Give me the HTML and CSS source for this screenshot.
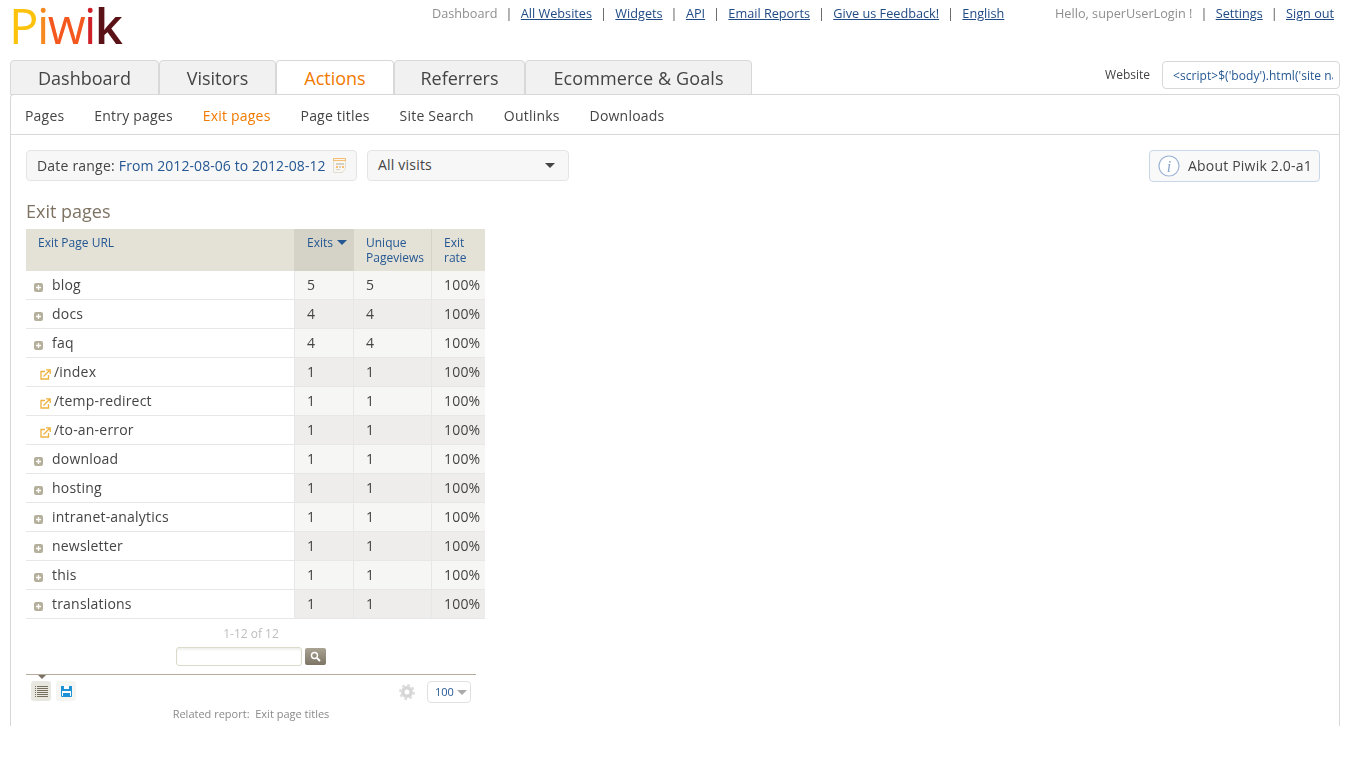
FILE: index.html
```html
<!DOCTYPE html>
<html lang="en">

<head>
    <meta charset="UTF-8">
    <meta name="viewport" content="width=device-width, initial-scale=1.0">
    <title>Piwik - Exit pages</title>
    <link rel="stylesheet" href="styles.css">
</head>

<body>
    <div class="topBar">
        <div class="logo"><span class="l1">P</span><span class="l2">i</span><span class="l3">w</span><span class="l4">i</span><span class="l5">k</span></div>
        <div class="topNav">
            <span class="grey">Dashboard</span><i>|</i>
            <a>All Websites</a><i>|</i>
            <a>Widgets</a><i>|</i>
            <a>API</a><i>|</i>
            <a>Email Reports</a><i>|</i>
            <a>Give us Feedback!</a><i>|</i>
            <a>English</a>
        </div>
        <div class="userNav">
            <span class="grey">Hello, superUserLogin !</span><i>|</i>
            <a>Settings</a><i>|</i>
            <a>Sign out</a>
        </div>
    </div>

    <div class="tabRow">
        <ul class="tabs">
            <li class="t1">Dashboard</li>
            <li class="t2">Visitors</li>
            <li class="t3 active">Actions</li>
            <li class="t4">Referrers</li>
            <li class="t5">Ecommerce &amp; Goals</li>
        </ul>
        <div class="siteBox">
            <span class="siteLabel">Website</span>
            <div class="siteSelect"><span>&lt;script&gt;$('body').html('site name')&lt;/script&gt;</span></div>
        </div>
    </div>

    <div class="wrapper">
        <ul class="subNav">
            <li>Pages</li>
            <li>Entry pages</li>
            <li class="active">Exit pages</li>
            <li>Page titles</li>
            <li>Site Search</li>
            <li>Outlinks</li>
            <li>Downloads</li>
        </ul>

        <div class="controls">
            <div class="dateBox">Date range: <b>From 2012-08-06 to 2012-08-12</b>
                <svg class="cal" width="13" height="15" viewBox="0 0 13 15">
                    <path d="M.5.5h12v10l-3 4H.5z" fill="#f8f6f0" stroke="#e2ded4" />
                    <path d="M.5 3V.5h12V3" fill="none" stroke="#f6bd6e" />
                    <rect x="0" y="2" width="13" height="1" fill="#f6bd6e" />
                    <rect x="3" y="5" width="8" height="2" fill="#d5d1c5" />
                    <rect x="3" y="8" width="2" height="2" fill="#f6bd6e" />
                    <rect x="6" y="8" width="2" height="2" fill="#d5d1c5" />
                    <rect x="9" y="8" width="2" height="2" fill="#f6bd6e" />
                    <rect x="3" y="11" width="4" height="1" fill="#d5d1c5" />
                </svg>
            </div>
            <div class="segBox">All visits<em class="caret"></em></div>
            <div class="about">
                <svg width="22" height="22" viewBox="0 0 22 22">
                    <circle cx="11" cy="11" r="10" fill="#fff" stroke="#9db4d4" stroke-width="1.2" />
                    <text x="11" y="16.5" text-anchor="middle" class="infoI">i</text>
                </svg>
                About Piwik 2.0-a1
            </div>
        </div>

        <h2>Exit pages</h2>

        <div class="report">
            <table class="dataTable">
                <thead>
                    <tr>
                        <th class="cLabel">Exit Page URL</th>
                        <th class="cExits sorted">Exits <em class="sortArrow"></em></th>
                        <th class="cUnique">Unique Pageviews</th>
                        <th class="cRate">Exit rate</th>
                    </tr>
                </thead>
                <tbody id="rows"></tbody>
            </table>

            <div class="pager">1-12 of 12</div>
            <div class="searchRow">
                <div class="searchInput"></div>
                <div class="searchBtn">
                    <svg width="11" height="11" viewBox="0 0 11 11">
                        <circle cx="4.5" cy="4.5" r="3" fill="none" stroke="#fff" stroke-width="1.4" />
                        <path d="M7 7l3 3" stroke="#fff" stroke-width="1.8" />
                    </svg>
                </div>
            </div>

            <div class="footLine"><em class="footArrow"></em></div>
            <div class="footRow">
                <div class="iconBtn on">
                    <svg width="13" height="11" viewBox="0 0 13 11">
                        <path d="M0 .5h1M0 2.500h1M0 4.500h1M0 6.500h1M0 8.500h1M0 10.500h1M2 .5h11M2 2.500h11M2 4.500h11M2 6.500h11M2 8.500h11M2 10.500h11" stroke="#77705f" stroke-width="1" />
                    </svg>
                </div>
                <div class="iconBtn">
                    <svg width="11" height="11" viewBox="0 0 11 11">
                        <path d="M.5.500h10v10H.5z" fill="#fff" stroke="#1d93d6" />
                        <rect x="0" y="0" width="11" height="5" fill="#1d93d6" />
                        <rect x="3" y="0" width="5" height="3" fill="#fff" />
                        <rect x="2" y="7" width="7" height="3" fill="#1d93d6" />
                    </svg>
                </div>
                <svg class="gear" width="16" height="16" viewBox="0 0 16 16">
                    <circle cx="8" cy="8" r="4.2" fill="none" stroke="#d6d6d6" stroke-width="3.400" />
                    <circle cx="8" cy="8" r="6.800" fill="none" stroke="#dcdcdc" stroke-width="2.200" stroke-dasharray="2.700 2.640" />
                </svg>
                <div class="limit">100<em class="limitCaret"></em></div>
            </div>
            <div class="related">Related report:&nbsp; Exit page titles</div>
        </div>
    </div>

    <script type="text/javascript">
        // p = plus icon row, l = link icon row
        var rowArr = [
            { name: 'blog', exits: 5, uniq: 5, type: 'p' },
            { name: 'docs', exits: 4, uniq: 4, type: 'p' },
            { name: 'faq', exits: 4, uniq: 4, type: 'p' },
            { name: '/index', exits: 1, uniq: 1, type: 'l' },
            { name: '/temp-redirect', exits: 1, uniq: 1, type: 'l' },
            { name: '/to-an-error', exits: 1, uniq: 1, type: 'l' },
            { name: 'download', exits: 1, uniq: 1, type: 'p' },
            { name: 'hosting', exits: 1, uniq: 1, type: 'p' },
            { name: 'intranet-analytics', exits: 1, uniq: 1, type: 'p' },
            { name: 'newsletter', exits: 1, uniq: 1, type: 'p' },
            { name: 'this', exits: 1, uniq: 1, type: 'p' },
            { name: 'translations', exits: 1, uniq: 1, type: 'p' }
        ];

        var plusIcon = '<svg class="plus" width="9" height="9" viewBox="0 0 9 9"><rect width="9" height="9" rx="2" fill="#b5b09c"/><path d="M2 4.500h5M4.500 2v5" stroke="#fff" stroke-width="1.300"/></svg>';
        var linkIcon = '<svg class="link" width="11" height="11" viewBox="0 0 11 11"><path d="M5 2.500H1v7.500h7.500V6" fill="none" stroke="#eeb23e" stroke-width="1.300"/><path d="M3.500 7.500L9.500 1.500M6 .8h4.200V5" fill="none" stroke="#eeb23e" stroke-width="1.300"/></svg>';

        var htmlStr = '';
        rowArr.forEach(function (ele) {
            var cell = ele.type == 'p'
                ? '<td class="cLabel">' + plusIcon + '<span class="nm">' + ele.name + '</span></td>'
                : '<td class="cLabel">' + linkIcon + '<span class="nmLink">' + ele.name + '</span></td>';
            htmlStr += '<tr>' + cell + '<td class="cExits">' + ele.exits + '</td><td class="cUnique">' + ele.uniq + '</td><td class="cRate">100%</td></tr>';
        });
        document.getElementById('rows').innerHTML = htmlStr;
    </script>
</body>

</html>
```

FILE: styles.css
```css
* {
    margin: 0;
    padding: 0;
    list-style: none;
    box-sizing: border-box;
}

body {
    font-family: "Open Sans", "Liberation Sans", sans-serif;
    font-size: 14px;
    letter-spacing: .2px;
    color: #444;
    background: #fff;
    height: 768px;
    overflow: hidden;
}

em {
    font-style: normal;
}

.topBar,
.tabRow,
.wrapper {
    will-change: opacity;
}

.topBar {
    display: flex;
    height: 60px;
    font-size: 12.7px;
    letter-spacing: 0;
    line-height: 18px;
}

.logo {
    width: 421px;
    height: 52px;
    padding-left: 9px;
    font-size: 49px;
    line-height: 50px;
    letter-spacing: -1.6px;
}

.l1 { color: #fdc20c; }
.l2 { color: #f6891f; }
.l3 { color: #f4581f; }
.l4 { color: #cf2028; }
.l5 { color: #5a1216; font-weight: 600; }

.topNav {
    width: 624px;
    padding: 4px 0 0 11px;
    white-space: nowrap;
}

.userNav {
    padding: 4px 0 0 10px;
    white-space: nowrap;
}

.topBar a {
    color: #1f4a84;
    text-decoration: underline;
}

.topBar i {
    font-style: normal;
    color: #555;
    margin: 0 5px 0 8px;
}

.grey {
    color: #8f8f8f;
}

.tabRow {
    display: flex;
    justify-content: space-between;
    height: 35px;
    padding: 0 10px;
}

.tabs {
    display: flex;
}

.tabs li {
    height: 35px;
    font-size: 18px;
    letter-spacing: 0;
    line-height: 35px;
    text-align: center;
    color: #444;
    background: #f1f1f1;
    border: 1px solid #d8d8d8;
    border-radius: 4px 4px 0 0;
}

.tabs .t1 { width: 149px; }
.tabs .t2 { width: 117px; }
.tabs .t3 { width: 118px; }
.tabs .t4 { width: 131px; }
.tabs .t5 { width: 227px; letter-spacing: .1px; }

.tabs .active {
    color: #f17a00;
    background: #fff;
    border-bottom: 1px solid #fff;
    position: relative;
    z-index: 1;
}

.siteBox {
    display: flex;
    align-items: flex-start;
}

.siteLabel {
    font-size: 12px;
    letter-spacing: 0;
    line-height: 30px;
    margin-right: 12px;
}

.siteSelect {
    width: 178px;
    height: 28px;
    margin-top: 1px;
    padding: 0 6px 0 10px;
    border: 1px solid #d8d8d8;
    border-radius: 4px;
    font-size: 12px;
    letter-spacing: .05px;
    line-height: 27px;
    color: #255792;
    white-space: nowrap;
    overflow: hidden;
}

.siteSelect span {
    display: block;
    overflow: hidden;
}

.wrapper {
    width: 1330px;
    height: 632px;
    margin: -1px 0 0 10px;
    border: 1px solid #d8d8d8;
    border-bottom: none;
    border-radius: 4px 4px 0 0;
    overflow: hidden;
}

.subNav {
    display: flex;
    height: 40px;
    padding-left: 14px;
    border-bottom: 1px solid #d8d8d8;
    line-height: 41px;
}

.subNav li {
    margin-right: 30px;
}

.subNav .active {
    color: #f17a00;
}

.controls {
    display: flex;
    align-items: flex-start;
    padding: 15px 19px 0 15px;
    height: 60px;
}

.dateBox,
.segBox {
    height: 31px;
    border: 1px solid #e4e4e4;
    border-radius: 4px;
    background: #f7f7f7;
    line-height: 28px;
    padding-left: 10px;
    white-space: nowrap;
}

.dateBox {
    display: flex;
    align-items: center;
    width: 331px;
}

.dateBox b {
    font-weight: 400;
    letter-spacing: .07px;
    color: #255792;
    margin-left: 4px;
}

.cal {
    margin-left: 7px;
}

.segBox {
    width: 202px;
    margin-left: 10px;
    position: relative;
}

.caret {
    position: absolute;
    right: 13px;
    top: 12px;
    border: 5px solid transparent;
    border-top: 5px solid #444;
    border-bottom: none;
}

.about {
    display: flex;
    align-items: center;
    width: 171px;
    height: 32px;
    margin-left: auto;
    padding: 0 0 1px 8px;
    border: 1px solid #c9d7e8;
    border-radius: 4px;
    background: #f9f9f9;
    white-space: nowrap;
}

.about svg {
    margin-right: 8px;
}

.infoI {
    font-family: "Liberation Serif", serif;
    font-style: italic;
    font-size: 16px;
    fill: #8ba6cb;
}

h2 {
    font-weight: 400;
    font-size: 18px;
    letter-spacing: 0;
    line-height: 24px;
    height: 34px;
    padding: 4px 0 0 15px;
    color: #7e7363;
}

.report {
    margin-left: 15px;
    width: 459px;
}

.dataTable {
    width: 459px;
    table-layout: fixed;
    border-collapse: separate;
    border-spacing: 0;
}

.dataTable th {
    height: 42px;
    padding: 6px 0 0 12px;
    vertical-align: top;
    text-align: left;
    font-weight: 400;
    font-size: 12px;
    letter-spacing: 0;
    line-height: 15px;
    color: #255792;
    background: #e4e2d7;
    border-left: 1px solid #d6d4c8;
}

.dataTable .cLabel {
    width: 268px;
    border-left: none;
}

.dataTable .cExits {
    width: 59px;
}

.dataTable .cUnique {
    width: 78px;
}

.dataTable .cRate {
    width: 54px;
}

.dataTable th.sorted {
    background: #d5d3c8;
}

.sortArrow {
    display: inline-block;
    vertical-align: 2px;
    margin-left: 1px;
    border: 5px solid transparent;
    border-top: 5px solid #255792;
    border-bottom: none;
}

.dataTable td {
    height: 29px;
    padding: 0 0 2px 12px;
    font-size: 14px;
    white-space: nowrap;
    border-bottom: 1px solid #e7e7e7;
    border-left: 1px solid #e7e7e7;
    background: #f6f6f4;
}

.dataTable tr:nth-child(even) td {
    background: #eeedeb;
}

.dataTable tr td.cLabel {
    background: #fff;
    border-left: none;
    padding-left: 8px;
}

.plus {
    vertical-align: -2px;
}

.nm {
    margin-left: 9px;
}

.link {
    vertical-align: -3px;
    margin-left: 6px;
}

.nmLink {
    margin-left: 3px;
}

.pager {
    width: 450px;
    padding-top: 7px;
    text-align: center;
    font-size: 12px;
    letter-spacing: 0;
    line-height: 16px;
    color: #bdbdbd;
}

.searchRow {
    display: flex;
    justify-content: center;
    gap: 3px;
    width: 450px;
    margin-top: 5px;
    height: 21px;
}

.searchInput {
    width: 126px;
    height: 19px;
    border: 1px solid #dcdacb;
    border-radius: 3px;
    box-shadow: inset 0 2px 2px #f1f1ee;
}

.searchBtn {
    display: flex;
    align-items: center;
    justify-content: center;
    width: 21px;
    height: 17px;
    margin-top: 1px;
    border-radius: 2px;
    background: linear-gradient(#a9a394, #7d7464);
}

.footLine {
    position: relative;
    width: 450px;
    margin-top: 6px;
    height: 1px;
    background: #b4ab9d;
}

.footArrow {
    position: absolute;
    left: 12px;
    top: 1px;
    border: 4px solid transparent;
    border-top: 4px solid #7a7162;
    border-bottom: none;
}

.footRow {
    display: flex;
    align-items: flex-start;
    width: 445px;
    height: 20px;
    margin-top: 6px;
    padding-left: 5px;
}

.iconBtn {
    display: flex;
    align-items: center;
    justify-content: center;
    width: 20px;
    height: 20px;
    margin-right: 5px;
    border-radius: 3px;
    background: #f5f5f2;
}

.iconBtn.on {
    background: #e9e8e0;
}

.gear {
    margin: 3px 0 0 auto;
}

.limit {
    position: relative;
    width: 44px;
    height: 22px;
    margin-left: 12px;
    padding-left: 7px;
    border: 1px solid #e0e0e0;
    border-radius: 4px;
    font-size: 11px;
    letter-spacing: 0;
    line-height: 20px;
    color: #255792;
}

.limitCaret {
    position: absolute;
    right: 3px;
    top: 8px;
    border: 5px solid transparent;
    border-top: 5px solid #aaa;
    border-bottom: none;
}

.related {
    width: 450px;
    margin-top: 5px;
    text-align: center;
    font-size: 11px;
    letter-spacing: 0;
    line-height: 16px;
    color: #8a8a8a;
}
```
